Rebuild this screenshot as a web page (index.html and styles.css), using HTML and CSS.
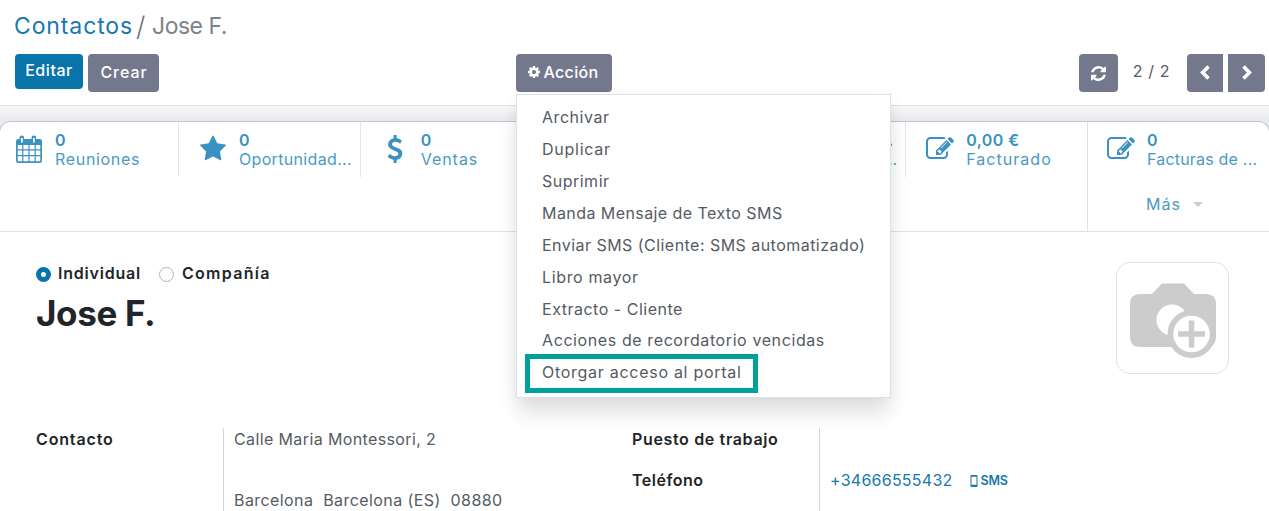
FILE: index.html
```html
<!DOCTYPE html>
<html lang="es">
<head>
<meta charset="utf-8">
<title>Contactos - Jose F.</title>
<link rel="stylesheet" href="styles.css">
</head>
<body>
<svg class="defs" width="0" height="0" aria-hidden="true">
  <symbol id="edit" viewBox="0 0 1792 1792"><path d="M888 1184l116-116-152-152-116 116v56h96v96h56zm440-720q-16-16-33 1l-350 350q-17 17-1 33t33-1l350-350q17-17 1-33zm80 594v190q0 119-84.500 203.500t-203.500 84.500h-832q-119 0-203.500-84.500t-84.500-203.500v-832q0-119 84.500-203.500t203.500-84.500h832q63 0 117 25 15 7 18 23 3 17-9 29l-49 49q-14 14-32 8-23-6-45-6h-832q-66 0-113 47t-47 113v832q0 66 47 113t113 47h832q66 0 113-47t47-113v-126q0-13 9-22l64-64q15-15 35-7t20 29zm-96-738l288 288-672 672h-288v-288zm444 132l-92 92-288-288 92-92q28-28 68-28t68 28l152 152q28 28 28 68t-28 68z"/></symbol>
</svg>
<header class="control-panel">
  <nav class="breadcrumb"><a class="crumb-link">Contactos</a><span class="crumb-sep">/</span><span class="crumb-current">Jose F.</span></nav>
  <div class="toolbar">
    <div class="main-buttons">
      <button class="btn btn-primary">Editar</button>
      <button class="btn btn-create">Crear</button>
    </div>
    <div class="action">
      <button class="btn btn-action"><svg class="gear" viewBox="128 128 1536 1536"><path d="M1152 896q0-106-75-181t-181-75-181 75-75 181 75 181 181 75 181-75 75-181zm512-109v222q0 12-8 23t-20 13l-185 28q-19 54-39 91 35 50 107 138 10 12 10 25t-9 23q-27 37-99 108t-94 71q-12 0-26-9l-138-108q-44 23-91 38-16 136-29 186-7 28-36 28h-222q-14 0-24.500-8.500t-11.500-21.500l-28-184q-49-16-90-37l-141 107q-10 9-25 9-14 0-25-11-126-114-165-168-7-10-7-23 0-12 8-23 15-21 51-66.500t54-70.500q-27-50-41-99l-183-27q-13-2-21-12.500t-8-23.500v-222q0-12 8-23t19-13l186-28q14-46 39-92-40-57-107-138-10-12-10-24 0-10 9-23 26-36 98.500-107.500t94.500-71.500q13 0 26 10l138 107q44-23 91-38 16-136 29-186 7-28 36-28h222q14 0 24.500 8.500t11.500 21.500l28 184q49 16 90 37l142-107q9-9 24-9 13 0 25 10 129 119 165 170 7 8 7 22 0 12-8 23-15 21-51 66.500t-54 70.500q26 50 41 98l183 28q13 2 21 12.500t8 23.500z"/></svg><span>Acción</span></button>
      <ul class="menu">
        <li class="m1">Archivar</li>
        <li class="m2">Duplicar</li>
        <li class="m3">Suprimir</li>
        <li class="m4">Manda Mensaje de Texto SMS</li>
        <li class="m5">Enviar SMS (Cliente: SMS automatizado)</li>
        <li class="m6">Libro mayor</li>
        <li class="m7">Extracto - Cliente</li>
        <li class="m8">Acciones de recordatorio vencidas</li>
        <li class="m9">Otorgar acceso al portal</li>
      </ul>
    </div>
    <div class="pager">
      <button class="btn btn-refresh"><svg viewBox="128 128 1536 1536"><path d="M1639 1056q0 5-1 7-64 268-268 434.500t-478 166.500q-146 0-282.500-55t-243.500-157l-129 129q-19 19-45 19t-45-19-19-45v-448q0-26 19-45t45-19h448q26 0 45 19t19 45-19 45l-137 137q71 66 161 102t187 36q134 0 250-65t186-179q11-17 53-117 8-23 30-23h192q13 0 22.500 9.500t9.500 22.500zm25-800v448q0 26-19 45t-45 19h-448q-26 0-45-19t-19-45 19-45l138-138q-148-137-349-137-134 0-250 65t-186 179q-11 17-53 117-8 23-30 23h-199q-13 0-22.500-9.500t-9.500-22.500v-7q65-268 270-434.500t480-166.500q146 0 284 55.500t245 156.500l130-129q19-19 45-19t45 19 19 45z"/></svg></button>
      <span class="pager-count">2 / 2</span>
      <button class="btn btn-prev"><svg viewBox="0 0 10 15"><path d="M8.500 1.500 2.600 7.500 8.500 13.500"/></svg></button>
      <button class="btn btn-next"><svg viewBox="0 0 10 15"><path d="M1.500 1.500 7.400 7.500 1.500 13.500"/></svg></button>
    </div>
  </div>
</header>
<main class="sheet">
  <section class="stats">
    <div class="stat"><svg class="stat-icon" viewBox="0 0 28 28"><path fill-rule="evenodd" d="M3.500 4H4.500V2.800a2.300 2.300 0 0 1 4.600 0V4H16.500V2.800a2.300 2.300 0 0 1 4.600 0V4H24.500A2.500 2.500 0 0 1 27 6.500V25.500A2.500 2.500 0 0 1 24.500 28H3.500A2.500 2.500 0 0 1 1 25.500V6.500A2.500 2.500 0 0 1 3.500 4ZM6 2.900V7.500H7.700V2.900ZM18 2.900V7.500H19.700V2.900ZM2.700 10V14.200H7.200V10ZM8.400 10V14.200H13.400V10ZM14.600 10V14.200H19.600V10ZM20.800 10V14.200H25.300V10ZM2.700 15.400V20H7.200V15.400ZM8.400 15.400V20H13.400V15.400ZM14.600 15.400V20H19.600V15.400ZM20.800 15.400V20H25.300V15.400ZM2.700 21.200V26.300H7.200V21.200ZM8.400 21.200V26.300H13.400V21.200ZM14.600 21.200V26.300H19.600V21.200ZM20.800 21.200V26.300H25.300V21.200Z"/></svg><div><b>0</b><span class="s1">Reuniones</span></div></div>
    <div class="stat"><svg class="stat-icon" viewBox="0 0 1792 1792"><path d="M1728 647q0 22-26 48l-363 354 86 500q1 7 1 20 0 21-10.500 35.500t-30.500 14.500q-19 0-40-12l-449-236-449 236q-22 12-40 12-21 0-31.500-14.500t-10.500-35.500q0-6 2-20l86-500-364-354q-25-27-25-48 0-37 56-46l502-73 225-455q19-41 49-41t49 41l225 455 502 73q56 9 56 46z"/></svg><div><b>0</b><span class="s2">Oportunidad...</span></div></div>
    <div class="stat"><svg class="stat-icon" viewBox="0 0 1792 1792"><path d="M1362 1185q0 153-99.500 263.500t-258.500 136.500v175q0 14-9 23t-23 9h-135q-13 0-22.500-9.500t-9.500-22.500v-175q-66-9-127.500-31t-101.500-44.500-74-48-46.500-37.500-17.500-18q-17-21-2-41l103-135q7-10 23-12 15-2 24 9l2 2q113 99 243 125 37 8 74 8 81 0 142.500-43t61.500-122q0-28-15-53t-33.500-42-58.500-37.500-66-32-80-32.500q-39-16-61.500-25t-61.500-26.500-62.500-31-56.500-35.500-53.500-42.500-43.500-49-35.500-58-21-66.500-8.500-78q0-138 98-242t255-134v-180q0-13 9.500-22.500t22.500-9.500h135q14 0 23 9t9 23v176q57 6 110.500 23t87 33.500 63.500 37.500 39 29 15 14q17 18 5 38l-81 146q-8 15-23 16-14 3-27-7-3-3-14.500-12t-39-26.500-58.500-32-74.500-26-85.500-11.500q-95 0-155 43t-60 111q0 26 8.500 48t29.500 41.500 39.500 33 56 31 60.500 27 70 27.500q53 20 81 31.500t76 35 75.500 42.500 62 50 53 63.500 31.500 76.500 13 94z"/></svg><div><b>0</b><span class="s3">Ventas</span></div></div>
    <div class="stat"></div>
    <div class="stat stat-cut"><div><b>.</b><span>..</span></div></div>
    <div class="stat"><svg class="stat-icon" viewBox="0 0 1792 1792"><use href="#edit"/></svg><div><b class="amount">0,00 €</b><span class="s4">Facturado</span></div></div>
    <div class="stat-last">
      <div class="stat"><svg class="stat-icon" viewBox="0 0 1792 1792"><use href="#edit"/></svg><div><b>0</b><span class="s5">Facturas de ...</span></div></div>
      <div class="more"><span>Más</span><i class="caret"></i></div>
    </div>
  </section>
  <section class="profile">
    <div class="identity">
      <div class="kind"><i class="radio checked"></i><span class="individual">Individual</span><i class="radio"></i><span class="company">Compañía</span></div>
      <h1>Jose F.</h1>
    </div>
    <div class="avatar"><svg viewBox="0 0 86 76"><path fill="#ccc" d="M10 11H22L32 0.500H54L64 11H76Q86 11 86 21V54Q86 64 76 64H10Q0 64 0 54V21Q0 11 10 11Z"/><circle cx="42" cy="37" r="15.500" fill="#fff"/><circle cx="61.500" cy="51" r="24" fill="#ccc"/><circle cx="61.500" cy="51" r="18.300" fill="#fff"/><path stroke="#ccc" stroke-width="5.500" d="M61.500 37.500V64.500M48 51H75"/></svg></div>
  </section>
  <section class="fields">
    <div class="label contact">Contacto</div>
    <div class="value address"><p class="street">Calle Maria Montessori, 2</p><p class="city">Barcelona&nbsp; Barcelona (ES)&nbsp; 08880</p></div>
    <div class="labels"><div class="label job">Puesto de trabajo</div><div class="label phone-label">Teléfono</div></div>
    <div class="value phone"><span class="number">+34666555432</span><svg viewBox="0 0 8 12"><path fill-rule="evenodd" d="M1.500 0H6.500Q7.500 0 7.500 1V11Q7.500 12 6.500 12H1.500Q.5 12 .5 11V1Q.5 0 1.500 0ZM1.500 1.800V9.800H6.500V1.800Z"/></svg><span class="sms">SMS</span></div>
  </section>
</main>
</body>
</html>
```
FILE: styles.css
```css
*, *::after { box-sizing: border-box; }
body { margin: 0; height: 511px; overflow: hidden; background: #fff; color: #555b62; font: 400 16px/20px Inter, "Open Sans", sans-serif; display: flex; flex-direction: column; }
.defs { position: absolute; }
svg { fill: currentColor; flex: none; display: block; }
p, h1, ul { margin: 0; padding: 0; }
b, span { white-space: nowrap; }

.control-panel { height: 106px; flex: none; border-bottom: 1px solid #dee2e6; padding: 11px 4px 0 15px; }
.breadcrumb { height: 43px; display: flex; font-size: 23px; line-height: 31px; }
.crumb-link { color: #1878ae; letter-spacing: .88px; width: 122px; margin-left: -1px; }
.crumb-sep { color: #6c757d; width: 16px; font-size: 27px; font-weight: 300; }
.crumb-current { color: #7b838a; letter-spacing: -.5px; }
.toolbar { display: grid; grid-template-columns: 501px 1fr auto; }
.main-buttons, .pager { display: flex; align-items: flex-start; }
.btn { border: 0; border-radius: 4px; background: #74788d; color: #fff; height: 38px; padding: 0 0 2px; font: 500 16px/20px Inter, sans-serif; display: flex; align-items: center; justify-content: center; }
.btn-primary { background: #0874aa; width: 68px; height: 35px; margin-right: 5px; padding-bottom: 3px; letter-spacing: .56px; }
.btn-create { width: 71px; letter-spacing: .94px; padding-left: 1px; }
.action { position: relative; width: 96px; }
.btn-action { width: 96px; gap: 4px; letter-spacing: .32px; padding-right: 2px; }
.gear { width: 12px; height: 12px; }
.btn-refresh { width: 39px; padding: 0; }
.btn-refresh svg { width: 15px; height: 15px; }
.pager-count { width: 69px; text-align: center; line-height: 35px; padding-right: 2px; letter-spacing: .62px; }
.btn-prev { width: 36px; margin-right: 5px; border-radius: 4px 0 0 4px; }
.btn-next { width: 37px; border-radius: 0 4px 4px 0; }
.btn-prev, .btn-next { padding-bottom: 1px; }
.btn-prev svg, .btn-next svg { width: 10px; height: 15px; fill: none; stroke: #fff; stroke-width: 3.6; }

.menu { position: absolute; z-index: 2; left: 0; top: 40px; width: 375px; height: 304px; padding: 6.2px 0 0 25px; list-style: none; background: #fff; border: 1px solid #dee2e6; box-shadow: 0 16px 20px -2px rgba(0, 0, 0, .13), 0 0 12px rgba(0, 0, 0, .04); }
.menu li { height: 31.9px; line-height: 32px; white-space: nowrap; }
.m1 { letter-spacing: .55px; }
.m2 { letter-spacing: .74px; }
.m3 { letter-spacing: .49px; }
.m4 { letter-spacing: .43px; }
.m5 { letter-spacing: .46px; }
.m6 { letter-spacing: .64px; }
.m7 { letter-spacing: .51px; }
.m8 { letter-spacing: .6px; }
.m9 { letter-spacing: .72px; position: relative; }
.m9::after { content: ""; position: absolute; left: -17px; top: -2.2px; width: 233px; height: 39px; border: 5px solid #00a09d; }

.sheet { flex: 1; background: linear-gradient(#f6f7f9, #e9eaec 15px); padding-top: 15px; display: flex; flex-direction: column; }
.stats { flex: none; height: 111px; margin: 0 -1px; border: solid #c3c5d0; border-width: 1px 1px 0; border-radius: 12px 12px 0 0; background: #fff; overflow: hidden; display: grid; grid-template-columns: 178px repeat(5, 181.8px) 1fr; box-shadow: inset 0 -1px #dee2e6; color: #4a9ac5; }
.stat { height: 55px; display: flex; padding: 9px 0 0 21px; border-left: 1px solid #e2e5e8; }
.stats > .stat:first-child { padding-left: 17px; border-left: 0; }
.stat-icon { color: #3b91bf; width: 28px; height: 28px; margin: 4px 12px 0 -1px; }
.stat b, .stat span { display: block; line-height: 19px; }
.stat b { font-weight: 600; color: #3b91bf; }
.stats > .stat:first-child .stat-icon { margin-left: -2px; }
.amount { letter-spacing: .42px; }
.s1 { letter-spacing: .68px; }
.s2 { letter-spacing: .33px; }
.s3 { letter-spacing: .94px; }
.s4 { letter-spacing: 1.04px; }
.s5 { letter-spacing: .2px; }
.stat-cut { justify-content: flex-end; padding-right: 8px; }
.stat-last { border-left: 1px solid #dee2e6; }
.stat-last .stat { padding-left: 20px; border: 0; }
.more { display: flex; align-items: center; padding: 17px 0 0 58px; letter-spacing: 1.1px; }
.caret { margin-left: 12px; border: solid transparent; border-width: 5px 5px 0; border-top-color: #ccc; }

.profile { flex: none; height: 196px; background: #fff; display: flex; justify-content: space-between; padding: 30px 40px 0 36px; }
.kind { display: flex; align-items: center; height: 22px; color: #212529; font-weight: 600; }
.radio { width: 15px; height: 15px; border: 1px solid #adb5bd; border-radius: 50%; margin-top: 3px; }
.checked { border: 5px solid #0874aa; }
.individual { letter-spacing: .78px; margin: 0 18px 0 7px; }
.company { letter-spacing: 1.3px; margin-left: 8px; }
h1 { font: 700 35px/44px Inter, sans-serif; letter-spacing: -.35px; color: #212529; margin-top: 7px; }
.avatar { width: 113px; height: 112px; border: 1px solid #dee2e6; border-radius: 14px; padding: 20px 0 0 13px; }
.avatar svg { width: 86px; height: 76px; }

.fields { flex: 1; background: #fff; display: grid; grid-template-columns: 187px 409px 187px 1fr; padding-left: 36px; line-height: 22px; }
.label { color: #212529; font-weight: 600; }
.value { border-left: 1px solid #d5d7da; padding-left: 10px; }
.contact { letter-spacing: .85px; }
.street { letter-spacing: .38px; margin-bottom: 39px; }
.city { letter-spacing: .42px; white-space: nowrap; }
.job { letter-spacing: .65px; margin-bottom: 19px; }
.phone-label { letter-spacing: .5px; }
.phone { display: flex; align-items: flex-start; padding: 41px 0 0 10px; color: #1878ae; }
.number { letter-spacing: .25px; }
.phone svg { width: 8px; height: 12px; margin: 6px 3px 0 17px; }
.sms { font-size: 12.5px; line-height: 23px; font-weight: 600; letter-spacing: -.2px; }
```
